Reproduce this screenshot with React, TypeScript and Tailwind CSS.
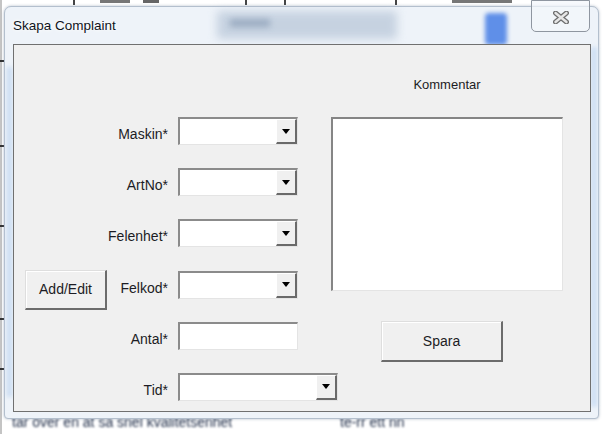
import React from 'react';

const ink = 'text-[#1c1c24]';

function Arrow() {
  return (
    <svg width="8" height="5" viewBox="0 0 8 5" className="block">
      <path d="M0 0 H8 L4 5 Z" fill="#000" />
    </svg>
  );
}

function Combo({ width }: { width: string }) {
  return (
    <div
      className={`${width} h-[28px] shrink-0 flex bg-white border-t-2 border-l-2 border-[#8b8b8b] border-r border-b border-r-[#e4e4e4] border-b-[#e4e4e4]`}
    >
      <div className="flex-1" />
      <div className="w-[21px] h-full flex items-center justify-center bg-[#f0f0f0] border-t border-l border-white border-r-2 border-b-2 border-r-[#6a6a6a] border-b-[#6a6a6a]">
        <Arrow />
      </div>
    </div>
  );
}

function TextBox() {
  return (
    <div className="w-[120px] h-[28px] shrink-0 bg-white border-t-2 border-l-2 border-[#8b8b8b] border-r border-b border-r-[#e4e4e4] border-b-[#e4e4e4]" />
  );
}

function Btn({ label, className }: { label: string; className: string }) {
  return (
    <button
      className={`${className} bg-[#f0f0f0] border-t border-l border-[#dedede] border-r-2 border-b-2 border-r-[#6c6c6c] border-b-[#6c6c6c] shadow-[inset_1px_1px_0_#ffffff] text-[14px] leading-4 ${ink}`}
    >
      {label}
    </button>
  );
}

function Label({ text }: { text: string }) {
  return <span className={`mt-[9px] text-[14px] leading-4 ${ink}`}>{text}</span>;
}

function Row({ label, children, left }: { label: string; children: React.ReactNode; left?: React.ReactNode }) {
  return (
    <div className="h-[28px] flex items-start gap-[10px]">
      <div className="w-[154px] shrink-0 h-full flex items-start justify-between">
        <div className="ml-[11px] -mt-px">{left}</div>
        <Label text={label} />
      </div>
      {children}
    </div>
  );
}

export default function App() {
  return (
    <div className="relative w-[605px] h-[434px] overflow-hidden bg-white font-['Liberation_Sans',Arial,sans-serif]">
      {/* sheet behind the dialog */}
      <div className="absolute inset-0">
        <div className="absolute top-0 left-[73px] w-[2px] h-[5px] bg-[#444]" />
        <div className="absolute top-0 left-[100px] w-[30px] h-[3px] bg-[#777] blur-[0.5px]" />
        <div className="absolute top-0 left-[143px] w-[16px] h-[3px] bg-[#666] blur-[0.5px]" />
        <div className="absolute top-0 left-[245px] w-[2px] h-[5px] bg-[#444]" />
        <div className="absolute top-0 left-[284px] w-[2px] h-[5px] bg-[#444]" />
        <div className="absolute top-0 left-[395px] w-[2px] h-[5px] bg-[#444]" />
        <div className="absolute top-0 left-[452px] w-[60px] h-[3px] bg-[#777] blur-[0.5px]" />
        <div className="absolute top-0 left-0 w-[2px] h-full bg-[#c4c4c4]" />
        <div className="absolute top-[60px] left-0 w-[4px] h-[2px] bg-[#333]" />
        <div className="absolute top-[145px] left-0 w-[4px] h-[2px] bg-[#333]" />
        <div className="absolute top-[225px] left-0 w-[4px] h-[2px] bg-[#333]" />
        <div className="absolute top-[318px] left-0 w-[4px] h-[2px] bg-[#333]" />
        <div className="absolute top-[368px] left-0 w-[4px] h-[2px] bg-[#333]" />
        <div className="absolute top-[414px] left-[12px] text-[14px] leading-4 text-[#23304a] blur-[0.8px] whitespace-nowrap">
          tar över en åt så snel kvalitetsenhet
        </div>
        <div className="absolute top-[414px] left-[340px] text-[14px] leading-4 text-[#23304a] blur-[0.8px] whitespace-nowrap">
          te-rr ett nn
        </div>
      </div>

      {/* dialog window */}
      <div className="absolute left-[4px] top-[6px] w-[595px] h-[413px] flex flex-col rounded-t-[7px] rounded-b-[4px] border border-[#b3bfcd] bg-[#eef3f9] shadow-[0_0_3px_rgba(90,110,140,0.45)]">
        {/* glass blur showing through the frame */}
        <div className="absolute left-[212px] top-[4px] w-[180px] h-[28px] bg-[#9fb2c9] opacity-50 blur-[5px]" />
        <div className="absolute left-[225px] top-[12px] w-[40px] h-[8px] bg-[#7f93ae] opacity-60 blur-[3px]" />
        <div className="absolute left-[480px] top-[6px] w-[22px] h-[32px] rounded-[4px] bg-[#5f8fe8] blur-[2px]" />
        <div className="absolute left-[2px] top-[60px] w-[5px] h-[330px] bg-[#b8d0ee] opacity-70 blur-[2px]" />
        <div className="absolute right-[1px] top-[40px] w-[6px] h-[360px] bg-[#c4d9f2] opacity-80 blur-[2px]" />

        {/* close button */}
        <div className="absolute top-[-7px] right-[8px] w-[59px] h-[32px] rounded-b-[5px] border border-[#8f96a0] bg-[#f3f7fb]/70 flex items-center justify-center">
          <svg width="16" height="13" viewBox="0 0 16 13" className="mt-[2px]">
            <path d="M2.5 2 L13.5 11 M13.5 2 L2.5 11" stroke="#6f6f6f" strokeWidth="5" strokeLinecap="round" />
            <path d="M2.5 2 L13.5 11 M13.5 2 L2.5 11" stroke="#e6e6e6" strokeWidth="2.4" strokeLinecap="round" />
          </svg>
        </div>

        <div className="relative h-[37px] flex items-center pl-[8px]">
          <span className="text-[13.5px] leading-4 text-[#10141c] [text-shadow:0_0_6px_#fff,0_0_3px_#fff]">
            Skapa Complaint
          </span>
        </div>

        {/* client area */}
        <div className="relative ml-[8px] w-[578px] h-[368px] flex border border-[#707070] bg-[#f0f0f0]">
          <div className="w-[317px] shrink-0 pt-[72px] flex flex-col gap-[23.2px]">
            <Row label="Maskin*">
              <Combo width="w-[120px]" />
            </Row>
            <Row label="ArtNo*">
              <Combo width="w-[120px]" />
            </Row>
            <Row label="Felenhet*">
              <Combo width="w-[120px]" />
            </Row>
            <Row label="Felkod*" left={<Btn label="Add/Edit" className="w-[82px] h-[40px]" />}>
              <Combo width="w-[120px]" />
            </Row>
            <Row label="Antal*">
              <TextBox />
            </Row>
            <Row label="Tid*">
              <Combo width="w-[160px]" />
            </Row>
          </div>

          <div className="w-[232px] shrink-0 pt-[32px] flex flex-col">
            <span className={`text-center text-[13px] leading-4 ${ink}`}>Kommentar</span>
            <div className="mt-[24px] w-[232px] h-[174px] bg-white border-t-2 border-l-2 border-[#858585] border-r border-b border-r-[#e4e4e4] border-b-[#e4e4e4]" />
            <Btn label="Spara" className="mt-[30px] ml-[50px] w-[122px] h-[41px]" />
          </div>
        </div>
      </div>
    </div>
  );
}
